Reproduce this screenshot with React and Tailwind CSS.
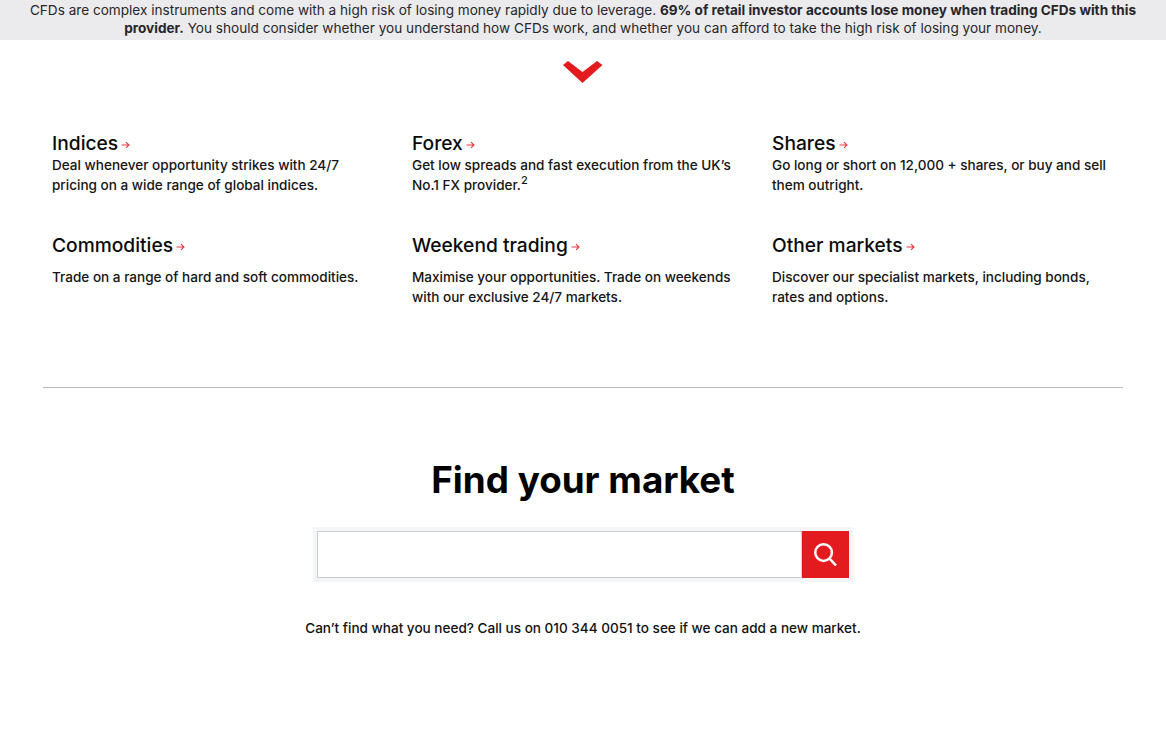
import React from 'react';

const markets = [
  { title: 'Indices', lines: ['Deal whenever opportunity strikes with 24/7', 'pricing on a wide range of global indices.'] },
  { title: 'Forex', lines: ['Get low spreads and fast execution from the UK’s', <>No.1 FX provider.<sup className="text-[11px]">2</sup></>] },
  { title: 'Shares', lines: ['Go long or short on 12,000 + shares, or buy and sell', 'them outright.'] },
  { title: 'Commodities', gap: true, lines: ['Trade on a range of hard and soft commodities.'] },
  { title: 'Weekend trading', gap: true, lines: ['Maximise your opportunities. Trade on weekends', 'with our exclusive 24/7 markets.'] },
  { title: 'Other markets', gap: true, lines: ['Discover our specialist markets, including bonds,', 'rates and options.'] },
];

function Arrow() {
  return (
    <svg width="9" height="8" viewBox="0 0 9 8" fill="none" stroke="#ea3a40" strokeWidth="1.1" className="ml-[3px] mt-[3px]">
      <path d="M0.5 4H8M5 1.2L8 4L5 6.8" />
    </svg>
  );
}

function MarketCard({ title, lines, gap }) {
  return (
    <div>
      <h3 className="flex items-center text-[19.2px] leading-[26px] font-medium text-[#0a0a0a]">
        {title}
        <Arrow />
      </h3>
      <div className={`text-[13.55px] leading-[19.5px] font-medium text-[#141414] ${gap ? 'mt-[10px]' : 'mt-0'}`}>
        {lines.map((line, i) => (
          <p key={i} className="whitespace-nowrap">{line}</p>
        ))}
      </div>
    </div>
  );
}

export default function App() {
  return (
    <div className="min-h-[730px] bg-white font-['Inter',sans-serif]">
      {/* Risk warning */}
      <div className="h-10 bg-[#ebebed] px-[25px] pt-[2px] text-center text-[13.6px] leading-[17.5px] text-[#26262b]">
        <p>
          CFDs are complex instruments and come with a high risk of losing money rapidly due to leverage.{' '}
          <strong className="font-bold">69% of retail investor accounts lose money when trading CFDs with this provider.</strong>{' '}
          You should consider whether you understand how CFDs work, and whether you can afford to take the high risk of losing your money.
        </p>
      </div>

      <div className="flex justify-center pt-[21px]">
        <svg width="40" height="22" viewBox="0 0 40 22" fill="#e31b1f">
          <path d="M0 4L5 0L19.5 11L34 0L39.5 4L19.5 22Z" />
        </svg>
      </div>

      <div className="mx-[43px] mt-[47px] border-b border-[#bcbcbc] pb-[53px]">
        <div className="grid grid-cols-[360px_360px_360px] grid-rows-[102px_102px] pl-[9px]">
          {markets.map((m) => (
            <MarketCard key={m.title} {...m} />
          ))}
        </div>
      </div>

      {/* Search */}
      <div className="mt-[67px] flex flex-col items-center">
        <h2 className="text-[36.8px] leading-[50px] font-bold text-black">Find your market</h2>
        <div className="mt-[22px] flex h-[55px] w-[540px] bg-[#f4f5f6] p-[4px]">
          <input className="h-full min-w-0 flex-1 border border-[#c9cfcf] bg-white" aria-label="Search" />
          <button className="flex h-full w-[47px] items-center justify-center bg-[#e31b1f]">
            <svg width="23" height="23" viewBox="0 0 24 24" fill="none" stroke="white" strokeWidth="2.6" className="-ml-[1px]">
              <circle cx="10" cy="10" r="8.7" />
              <path d="M16.5 16.5L23 23.5" />
            </svg>
          </button>
        </div>
        <p className="mt-[36px] text-[13.55px] leading-[20px] font-medium text-[#111]">
          Can’t find what you need? Call us on 010 344 0051 to see if we can add a new market.
        </p>
      </div>
    </div>
  );
}
